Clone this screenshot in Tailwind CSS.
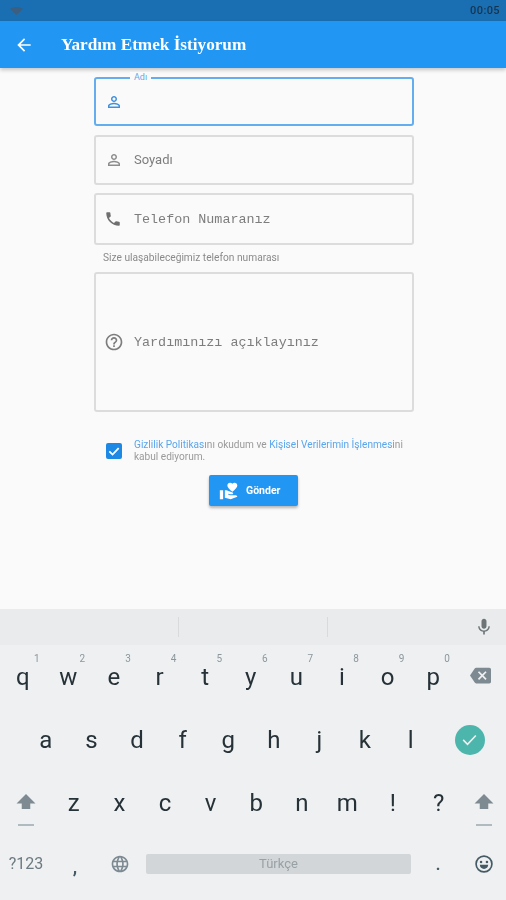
<!DOCTYPE html>
<html lang="tr">
<head>
    <meta charset="UTF-8">
    <meta name="viewport" content="width=device-width, initial-scale=1.0">
    <title>Yardım Etmek İstiyorum</title>
    <script src="https://cdn.jsdelivr.net/npm/@tailwindcss/browser@4"></script>
</head>
<body class="bg-[#fafafa]">
<div class="w-[506px] h-[900px] overflow-hidden flex flex-col font-['Roboto',sans-serif] blur-[0.5px]">

    <!-- status bar -->
    <div class="h-[21px] shrink-0 bg-[#1a6fb3] flex items-center justify-between pl-[10px] pr-[6px]">
        <svg class="w-[13px] h-[8px]" viewBox="0 0 13 8"><path fill="#3a5f80" d="M0 2c3-2.6 10-2.6 13 0L6.500 8z"/></svg>
        <span class="text-[11px] leading-none text-[#17344d] tracking-[0.4px] font-medium">00:05</span>
    </div>

    <!-- app bar -->
    <header class="h-[47px] shrink-0 bg-[#2196f3] flex items-center shadow-[0_2px_4px_rgba(0,0,0,0.22)] relative">
        <svg class="w-[20px] h-[20px] ml-[14px]" viewBox="0 0 24 24"><path fill="#fff" d="M20 11H7.830l5.590-5.590L12 4l-8 8 8 8 1.410-1.410L7.830 13H20v-2z"/></svg>
        <h1 class="ml-[27px] text-[17.200px] font-bold text-white font-['Liberation_Serif',serif]">Yardım Etmek İstiyorum</h1>
    </header>

    <!-- form -->
    <main class="flex-1 flex flex-col pl-[94px] pr-[92px] pt-[9px]">
        <div class="relative h-[49px] shrink-0 border-2 border-[#64aef0] rounded-[3px] flex items-center pl-[9px]">
            <span class="absolute left-[34px] -top-[7px] bg-[#fafafa] px-[4px] text-[9px] leading-[10px] text-[#6aa9ea]">Adı</span>
            <svg class="w-[18px] h-[18px]" viewBox="0 0 24 24"><path fill="#3f8fdc" d="M12 5.900c1.160 0 2.100.940 2.100 2.100s-.940 2.100-2.100 2.100S9.900 9.160 9.900 8s.940-2.100 2.100-2.100m0 9c2.970 0 6.100 1.460 6.100 2.100v1.100H5.900V17c0-.640 3.130-2.100 6.100-2.100M12 4C9.790 4 8 5.790 8 8s1.790 4 4 4 4-1.790 4-4-1.790-4-4-4zm0 9c-2.670 0-8 1.340-8 4v3h16v-3c0-2.660-5.330-4-8-4z"/></svg>
        </div>

        <div class="mt-[9px] h-[50px] shrink-0 border-2 border-[#dcdcdc] rounded-[3px] flex items-center pl-[9px]">
            <svg class="w-[18px] h-[18px]" viewBox="0 0 24 24"><path fill="#8c8c8c" d="M12 5.900c1.160 0 2.100.940 2.100 2.100s-.940 2.100-2.100 2.100S9.900 9.160 9.900 8s.940-2.100 2.100-2.100m0 9c2.970 0 6.100 1.460 6.100 2.100v1.100H5.900V17c0-.640 3.130-2.100 6.100-2.100M12 4C9.790 4 8 5.790 8 8s1.790 4 4 4 4-1.790 4-4-1.790-4-4-4zm0 9c-2.670 0-8 1.340-8 4v3h16v-3c0-2.660-5.330-4-8-4z"/></svg>
            <span class="ml-[11px] text-[13px] text-[#7d7d7d]">Soyadı</span>
        </div>

        <div class="mt-[8px] h-[52px] shrink-0 border-2 border-[#dcdcdc] rounded-[3px] flex items-center pl-[8px]">
            <svg class="w-[18px] h-[18px]" viewBox="0 0 24 24"><path fill="#6f6f6f" d="M6.620 10.790c1.440 2.830 3.760 5.140 6.590 6.590l2.200-2.200c.270-.270.670-.360 1.020-.240 1.120.370 2.330.570 3.570.570.550 0 1 .450 1 1V20c0 .550-.450 1-1 1-9.390 0-17-7.610-17-17 0-.550.450-1 1-1h3.500c.550 0 1 .450 1 1 0 1.250.200 2.450.570 3.570.110.350.030.740-.250 1.020l-2.200 2.200z"/></svg>
            <span class="ml-[12px] mt-[2px] text-[13.400px] font-['Liberation_Mono',monospace] text-[#7d7d7d]">Telefon Numaranız</span>
        </div>

        <p class="mt-[7px] ml-[9px] text-[10.200px] leading-[12px] text-[#8a8a8a]">Size ulaşabileceğimiz telefon numarası</p>

        <div class="mt-[8px] h-[140px] shrink-0 border-2 border-[#dcdcdc] rounded-[3px] flex items-center pl-[8px]">
            <svg class="w-[20px] h-[20px]" viewBox="0 0 24 24"><path fill="#7d7d7d" d="M11 18h2v-2h-2v2zm1-16C6.480 2 2 6.480 2 12s4.480 10 10 10 10-4.480 10-10S17.520 2 12 2zm0 18c-4.410 0-8-3.590-8-8s3.590-8 8-8 8 3.590 8 8-3.590 8-8 8zm0-14c-2.210 0-4 1.790-4 4h2c0-1.100.900-2 2-2s2 .900 2 2c0 2-3 1.750-3 5h2c0-2.250 3-2.500 3-5 0-2.210-1.790-4-4-4z"/></svg>
            <span class="ml-[10px] mt-[2px] text-[13.400px] font-['Liberation_Mono',monospace] text-[#7d7d7d]">Yardımınızı açıklayınız</span>
        </div>

        <div class="mt-[26px] flex items-center">
            <div class="w-[16px] h-[16px] ml-[12px] shrink-0 rounded-[2px] bg-[#1e88e5] flex items-center justify-center">
                <svg class="w-[14px] h-[14px]" viewBox="0 0 24 24"><path fill="none" stroke="#fff" stroke-width="3" d="M4 12.500l5.500 5.500L20 7"/></svg>
            </div>
            <p class="ml-[12px] mt-[1px] text-[10.100px] leading-[12px] text-[#9a9a9a] whitespace-nowrap"><span class="text-[#5aa5ec]">Gizlilik Politikası</span>nı okudum ve <span class="text-[#5aa5ec]">Kişisel Verilerimin İşlenmesi</span>ni<br>kabul ediyorum.</p>
        </div>

        <button class="mt-[12px] self-center ml-[-1px] w-[89px] h-[31px] bg-[#2196f3] rounded-[2px] shadow-[0_2px_3px_rgba(0,0,0,0.28)] flex items-center pl-[10px]">
            <svg class="w-[20px] h-[20px]" viewBox="0 0 24 24"><path fill="#fff" d="M1 11h4v11H1z M16 3.250C16.650 2.490 17.660 2 18.700 2 20.550 2 22 3.450 22 5.250c0 2.270-2.910 4.730-6 7.750-3.090-3-6-5.480-6-7.750C10 3.450 11.450 2 13.300 2c1.040 0 2.050.490 2.700 1.250zM20 17h-7l-2.090-.730.330-.940L13 16h2.820c.650 0 1.180-.530 1.180-1.180 0-.490-.310-.930-.770-1.110L8.970 11H7v9.020L14 22l8.010-3c-.010-1.100-.900-2-2.010-2z"/></svg>
            <span class="ml-[7px] text-[10.500px] font-bold text-white">Gönder</span>
        </button>
    </main>

    <!-- keyboard -->
    <div class="h-[291px] shrink-0 bg-[#eef0f2] flex flex-col text-[#263238] text-[24px] leading-none">
        <div class="h-[36px] shrink-0 bg-[#e9ebec] grid grid-cols-[179px_149px_1fr] items-center">
            <div class="h-[20px] border-r border-[#d8dadb]"></div>
            <div class="h-[20px] border-r border-[#d8dadb]"></div>
            <div class="flex justify-end pr-[12px]">
                <svg class="w-[20px] h-[20px]" viewBox="0 0 24 24"><path fill="#6d7579" d="M12 14c1.660 0 2.990-1.340 2.990-3L15 5c0-1.660-1.340-3-3-3S9 3.340 9 5v6c0 1.660 1.340 3 3 3zm5.300-3c0 3-2.540 5.100-5.300 5.100S6.700 14 6.700 11H5c0 3.410 2.720 6.230 6 6.720V21h2v-3.280c3.280-.480 6-3.300 6-6.720h-1.700z"/></svg>
            </div>
        </div>

        <div class="h-[63px] grid grid-cols-[repeat(10,45.6px)_1fr] items-center text-center">
            <div class="relative">q<span class="absolute left-[34px] -top-[11px] text-[10px] text-[#8c979d]">1</span></div>
            <div class="relative">w<span class="absolute left-[34px] -top-[11px] text-[10px] text-[#8c979d]">2</span></div>
            <div class="relative">e<span class="absolute left-[34px] -top-[11px] text-[10px] text-[#8c979d]">3</span></div>
            <div class="relative">r<span class="absolute left-[34px] -top-[11px] text-[10px] text-[#8c979d]">4</span></div>
            <div class="relative">t<span class="absolute left-[34px] -top-[11px] text-[10px] text-[#8c979d]">5</span></div>
            <div class="relative">y<span class="absolute left-[34px] -top-[11px] text-[10px] text-[#8c979d]">6</span></div>
            <div class="relative">u<span class="absolute left-[34px] -top-[11px] text-[10px] text-[#8c979d]">7</span></div>
            <div class="relative">i<span class="absolute left-[34px] -top-[11px] text-[10px] text-[#8c979d]">8</span></div>
            <div class="relative">o<span class="absolute left-[34px] -top-[11px] text-[10px] text-[#8c979d]">9</span></div>
            <div class="relative">p<span class="absolute left-[34px] -top-[11px] text-[10px] text-[#8c979d]">0</span></div>
            <div class="flex justify-center">
                <svg class="w-[21px] h-[21px] -mt-[3px]" viewBox="0 0 24 24"><path fill="#7d8a91" d="M22 3H7c-.690 0-1.230.350-1.590.880L0 12l5.410 8.110c.360.530.900.890 1.590.890h15c1.100 0 2-.900 2-2V5c0-1.100-.900-2-2-2zm-3 12.590L17.590 17 14 13.410 10.410 17 9 15.590 12.590 12 9 8.410 10.410 7 14 10.590 17.590 7 19 8.410 15.410 12 19 15.590z"/></svg>
            </div>
        </div>

        <div class="h-[63px] pl-[23px] grid grid-cols-[repeat(9,45.6px)_1fr] items-center text-center">
            <div>a</div><div>s</div><div>d</div><div>f</div><div>g</div><div>h</div><div>j</div><div>k</div><div>l</div>
            <div class="flex justify-center">
                <div class="w-[30px] h-[30px] rounded-full bg-[#4db6ac] flex items-center justify-center">
                    <svg class="w-[19px] h-[19px]" viewBox="0 0 24 24"><path fill="none" stroke="#eef0f2" stroke-width="2" d="M4 12.500l5.500 5.500L20 7"/></svg>
                </div>
            </div>
        </div>

        <div class="h-[63px] grid grid-cols-[51px_repeat(9,45.6px)_1fr] items-center text-center">
            <div class="flex flex-col items-center -mt-[2px]">
                <svg class="w-[22px] h-[17px]" viewBox="0 0 22 18"><path fill="#7d8a91" d="M11 1L21 11H15.500V17H6.500V11H1z"/></svg>
                <div class="w-[16px] h-[2px] mt-[14px] -mb-[16px] bg-[#b0bbc1]"></div>
            </div>
            <div>z</div><div>x</div><div>c</div><div>v</div><div>b</div><div>n</div><div>m</div><div>!</div><div>?</div>
            <div class="flex flex-col items-center -mt-[2px]">
                <svg class="w-[22px] h-[17px]" viewBox="0 0 22 18"><path fill="#7d8a91" d="M11 1L21 11H15.500V17H6.500V11H1z"/></svg>
                <div class="w-[16px] h-[2px] mt-[14px] -mb-[16px] bg-[#b0bbc1]"></div>
            </div>
        </div>

        <div class="h-[66px] grid grid-cols-[52px_46px_44px_273px_46px_45px] pb-[6px] items-center text-center">
            <div class="text-[16px] text-[#6d7a81]">?123</div>
            <div class="text-[18px] text-[#455a64] font-bold mt-[5px]">,</div>
            <div class="flex justify-center">
                <svg class="w-[20px] h-[20px]" viewBox="0 0 24 24"><path fill="#7d8a91" d="M11.990 2C6.470 2 2 6.480 2 12s4.470 10 9.990 10C17.520 22 22 17.520 22 12S17.520 2 11.990 2zm6.930 6h-2.950c-.320-1.250-.780-2.450-1.380-3.560 1.840.630 3.370 1.910 4.330 3.560zM12 4.040c.830 1.200 1.480 2.530 1.910 3.960h-3.820c.430-1.430 1.080-2.760 1.910-3.960zM4.260 14C4.100 13.360 4 12.690 4 12s.100-1.360.260-2h3.380c-.080.660-.140 1.320-.140 2 0 .680.060 1.340.140 2H4.260zm.820 2h2.950c.320 1.250.780 2.450 1.380 3.560-1.840-.630-3.370-1.900-4.330-3.560zm2.950-8H5.080c.960-1.660 2.490-2.930 4.330-3.560C8.810 5.550 8.350 6.750 8.030 8zM12 19.960c-.830-1.200-1.480-2.530-1.910-3.960h3.820c-.430 1.430-1.080 2.760-1.910 3.960zM14.340 14H9.660c-.090-.660-.160-1.320-.160-2 0-.680.070-1.350.160-2h4.680c.090.650.160 1.320.160 2 0 .680-.070 1.340-.160 2zm.250 5.560c.600-1.110 1.060-2.310 1.380-3.560h2.950c-.960 1.650-2.490 2.930-4.330 3.560zM16.360 14c.080-.660.140-1.320.140-2 0-.680-.060-1.340-.140-2h3.380c.160.640.260 1.310.260 2s-.100 1.360-.260 2h-3.380z"/></svg>
            </div>
            <div class="h-[20px] mx-[4px] bg-[#d2d6d8] rounded-[2px] text-[13px] leading-[20px] text-[#98a1a6]">Türkçe</div>
            <div class="text-[16px] text-[#455a64] font-bold mt-[2px]">.</div>
            <div class="flex justify-center">
                <svg class="w-[20px] h-[20px]" viewBox="0 0 24 24"><circle cx="12" cy="12" r="9.500" fill="none" stroke="#455a64" stroke-width="2"/><circle cx="8.500" cy="9.500" r="1.500" fill="#455a64"/><circle cx="15.500" cy="9.500" r="1.500" fill="#455a64"/><path fill="#455a64" d="M7 13h10c0 3-2.200 5-5 5s-5-2-5-5z"/></svg>
            </div>
        </div>
    </div>
</div>
</body>
</html>
